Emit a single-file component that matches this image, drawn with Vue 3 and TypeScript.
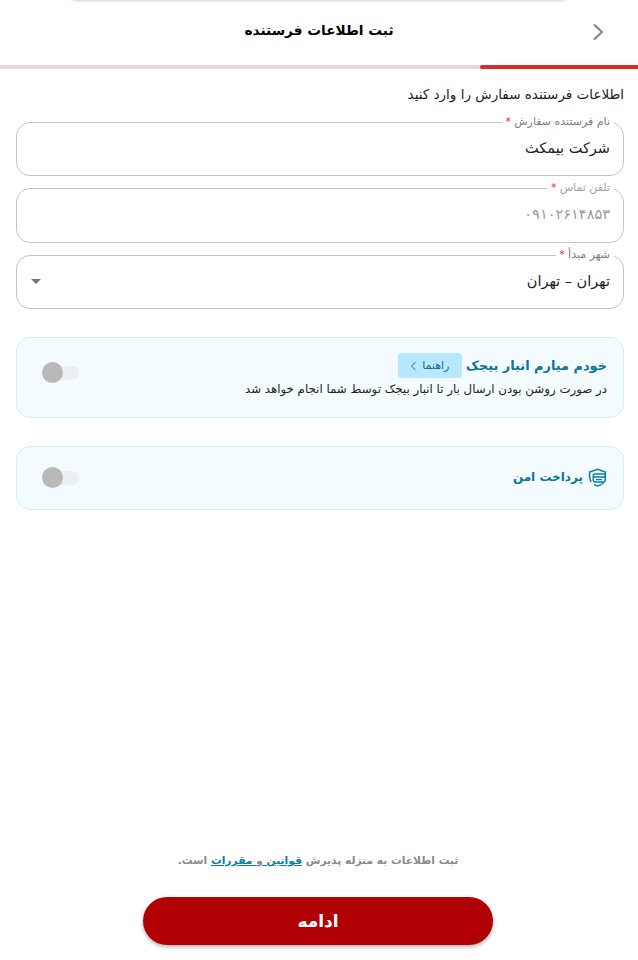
<script setup lang="ts">
interface Field { label: string; value: string; muted?: boolean; select?: boolean }
const fields: Field[] = [
  { label: 'نام فرستنده سفارش', value: 'شرکت بیمکث' },
  { label: 'تلفن تماس', value: '۰۹۱۰۲۶۱۴۸۵۳', muted: true },
  { label: 'شهر مبدأ', value: 'تهران – تهران', select: true },
]
</script>

<template>
  <div class="page" dir="rtl">
    <div class="top-sheet"></div>
    <header class="header">
      <svg class="back" width="12" height="18" viewBox="0 0 12 18" fill="none">
        <path d="M2 1.5 L10 9 L2 16.5" stroke="#808080" stroke-width="2" />
      </svg>
      <h1 class="title">ثبت اطلاعات فرستنده</h1>
    </header>
    <div class="progress"><div class="progress-fill"></div></div>

    <main class="content">
      <p class="intro">اطلاعات فرستنده سفارش را وارد کنید</p>

      <div class="fields">
        <fieldset v-for="f in fields" :key="f.label" class="field">
          <legend class="legend" :class="{ muted: f.muted }">{{ f.label }} <span class="star">*</span></legend>
          <div class="field-row">
            <span class="value" :class="{ muted: f.muted }">{{ f.value }}</span>
            <span v-if="f.select" class="caret"></span>
          </div>
        </fieldset>
      </div>

      <section class="card card-tall">
        <div class="card-text">
          <div class="card-head">
            <span class="card-title">خودم میارم انبار بیجک</span>
            <span class="guide">راهنما
              <svg width="7" height="10" viewBox="0 0 7 10" fill="none">
                <path d="M5.5 1 L1.5 5 L5.5 9" stroke="#0a6f93" stroke-width="1" />
              </svg>
            </span>
          </div>
          <p class="card-desc">در صورت روشن بودن ارسال بار تا انبار بیجک توسط شما انجام خواهد شد</p>
        </div>
        <div class="switch"><span class="knob"></span></div>
      </section>

      <section class="card card-short">
        <div class="secure">
          <svg width="19" height="19" viewBox="0 0 19 19" fill="none">
            <path d="M3.2 14 C2 12 1.6 10 1.6 8.5 V4 L9.5 1.2 L17.3 4 V10 C17.3 14 13.5 17 9.5 18 C8.2 17.7 7 17.1 6 16.4" stroke="#0a7ea4" stroke-width="1.5" />
            <rect x="5.2" y="6" width="12" height="8" rx="2" fill="#f3fbff" stroke="#0a7ea4" stroke-width="1.4" />
            <path d="M5.2 9 H17 M8 11.6 H14" stroke="#0a7ea4" stroke-width="1.3" />
          </svg>
          <span class="secure-title">پرداخت امن</span>
        </div>
        <div class="switch"><span class="knob"></span></div>
      </section>
    </main>

    <footer class="footer">
      <p class="terms">ثبت اطلاعات به منزله پذیرش <a class="link">قوانین <span class="and">و</span> مقررات</a> است.</p>
      <button class="cta" type="button">ادامه</button>
    </footer>
  </div>
</template>

<style>
html, body { margin: 0; background: #fff; }
</style>

<style scoped>
.page {
  position: relative;
  height: 960px;
  width: 638px;
  display: flex;
  flex-direction: column;
  overflow: hidden;
  background: #fff;
  font-family: "DejaVu Sans", "Noto Sans", sans-serif;
  color: #222;
}
.top-sheet {
  position: absolute;
  top: -10px;
  left: 70px;
  width: 498px;
  height: 10px;
  box-shadow: 0 1px 3px rgba(0, 0, 0, 0.18);
  border-radius: 6px;
}
.header {
  height: 65px;
  flex: none;
  box-sizing: border-box;
  display: flex;
  align-items: flex-start;
  justify-content: center;
  position: relative;
}
.back { position: absolute; right: 34px; top: 23px; }
.title {
  margin: 19px 0 0;
  font-size: 13.7px;
  line-height: 22px;
  font-weight: 700;
  color: #000;
}
.progress {
  height: 4px;
  flex: none;
  background: #f3d3d5;
  box-shadow: inset 0 1px 0 #e3dcdc;
}
.progress-fill {
  width: 158px;
  height: 100%;
  background: #d32f2f;
  border-radius: 2px 0 0 2px;
}
.content { padding: 0 14px 0 16px; flex: 1; }
.intro {
  margin: 15px 0 0;
  font-size: 13.5px;
  line-height: 20px;
  color: #222;
}
.fields {
  margin-top: 12px;
  display: flex;
  flex-direction: column;
  gap: 6px;
}
.field {
  margin: 0;
  padding: 0 9px 0 14px;
  height: 60px;
  box-sizing: border-box;
  border: 1px solid #c4c4c4;
  border-radius: 14px;
  min-width: 0;
}
.field:nth-child(2) { height: 61px; }
.legend {
  padding: 0 4px;
  font-size: 11px;
  line-height: 12px;
  color: #7c7c7c;
}
.legend.muted { color: #a2a2a2; }
.star { color: #e0203a; font-size: 10px; }
.field-row {
  height: 40px;
  padding-right: 4px;
  display: flex;
  align-items: center;
  justify-content: space-between;
}
.value { font-size: 14.5px; line-height: 20px; color: #222; }
.value.muted { color: #9a9a9a; }
.caret {
  width: 0;
  height: 0;
  border-left: 5px solid transparent;
  border-right: 5px solid transparent;
  border-top: 5px solid #757575;
}
.card {
  box-sizing: border-box;
  background: #f3fbff;
  border: 1px solid #d1eefa;
  border-radius: 14px;
  display: flex;
  align-items: center;
  justify-content: space-between;
  padding: 0 16px 0 26px;
}
.card-tall { height: 81px; margin-top: 28px; align-items: flex-start; padding-top: 15px; }
.card-short { height: 64px; margin-top: 28px; }
.card-head { display: flex; align-items: center; gap: 4px; height: 25px; }
.card-title { font-size: 12.9px; font-weight: 700; color: #0a7599; line-height: 20px; }
.guide {
  width: 64px;
  height: 25px;
  box-sizing: border-box;
  border-radius: 4px;
  background: #b8e8ff;
  color: #0a6f93;
  font-size: 11px;
  display: flex;
  align-items: center;
  justify-content: center;
  gap: 5px;
}
.card-desc {
  margin: 1px 0 0;
  font-size: 11.8px;
  line-height: 20px;
  color: #222;
}
.switch {
  position: relative;
  width: 36px;
  height: 14px;
  border-radius: 7px;
  background: #edf0f2;
  flex: none;
}
.card-tall .switch { margin-top: 13px; }
.knob {
  position: absolute;
  left: -1px;
  top: -4px;
  width: 21px;
  height: 21px;
  border-radius: 50%;
  background: #b9b9b9;
}
.secure { display: flex; align-items: center; gap: 5px; margin-top: -2px; }
.secure-title { font-size: 12px; font-weight: 700; color: #0a7599; }
.footer {
  flex: none;
  display: flex;
  flex-direction: column;
  align-items: center;
  padding: 0 2px 15px 0;
}
.terms {
  margin: 0;
  font-size: 10.7px;
  line-height: 20px;
  font-weight: 700;
  color: #8a8a8a;
}
.link { color: #0a7ea4; text-decoration: underline; }
.and { color: #7a8a90; }
.cta {
  margin-top: 26px;
  width: 350px;
  height: 48px;
  border: 0;
  border-radius: 24px;
  background: #b10005;
  color: #fff;
  font: 700 17px "DejaVu Sans", sans-serif;
  box-shadow: 0 2px 4px rgba(0, 0, 0, 0.3);
}
</style>
